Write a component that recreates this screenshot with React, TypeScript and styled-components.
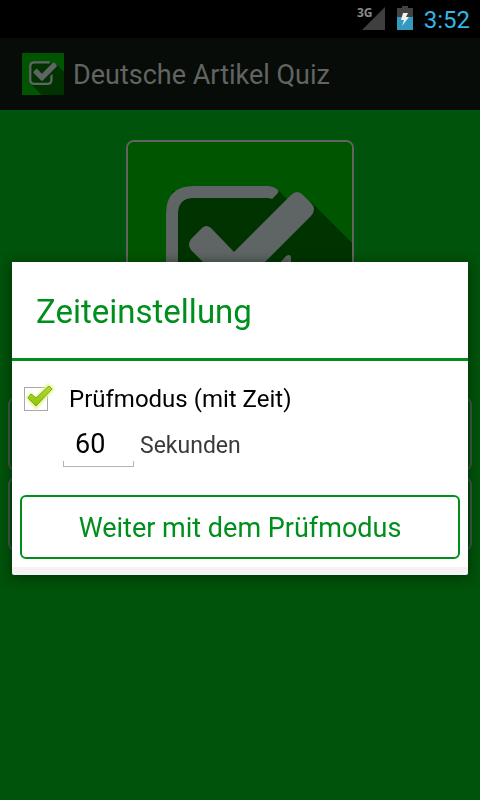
import React, { useState } from "react";
import styled, { createGlobalStyle } from "styled-components";

const GlobalStyle = createGlobalStyle`
  * { box-sizing: border-box; }
  body { margin: 0; background: #00530a; font-family: Roboto, "Liberation Sans", sans-serif; }
  button, input { font-family: inherit; }
`;

const Screen = styled.div`
  min-height: 100vh;
  display: flex;
  flex-direction: column;
  background: #00530a;
`;

const StatusBar = styled.header`
  height: 38px;
  flex: none;
  display: flex;
  align-items: center;
  justify-content: flex-end;
  gap: 11px;
  padding-right: 10px;
  background: #000;
`;

const Clock = styled.time`
  padding-top: 2px;
  font-size: 24px;
  line-height: 36px;
  color: #33b5e5;
`;

const ActionBar = styled.div`
  height: 72px;
  flex: none;
  display: flex;
  align-items: center;
  gap: 9px;
  padding: 0 22px;
  background: #070c08;
`;

const AppTitle = styled.h1`
  margin: 0;
  padding-top: 2px;
  font-size: 27px;
  line-height: 36px;
  font-weight: 400;
  color: #626462;
`;

const Home = styled.main`
  flex: 1;
  display: flex;
  flex-direction: column;
  align-items: center;
  gap: 8px;
  padding: 30px 8px;
`;

const LogoFrame = styled.div`
  width: 228px;
  margin-bottom: 22px;
  border: 2px solid #616461;
  border-radius: 8px;
  overflow: hidden;
  line-height: 0;
`;

const MenuButton = styled.button`
  width: 100%;
  height: 72px;
  border: 2px solid #4d574d;
  border-radius: 6px;
  background: transparent;
`;

const Overlay = styled.div`
  position: fixed;
  inset: 38px 0 0;
  display: flex;
  align-items: center;
  padding: 0 12px 1px;
`;

const Dialog = styled.form`
  flex: 1;
  background: #fff;
  border-bottom: 8px solid #f5f2f5;
  border-radius: 0 0 2px 2px;
  box-shadow: 0 2px 12px 1px rgba(0, 30, 0, 0.6);
`;

const DialogTitle = styled.h2`
  margin: 0;
  padding: 4px 24px 0;
  font-size: 33px;
  line-height: 92px;
  font-weight: 400;
  color: #008f1c;
  border-bottom: 3px solid #008f1c;
`;

const DialogBody = styled.div`
  padding: 16px 8px 8px;
`;

const CheckRow = styled.label`
  display: flex;
  align-items: center;
  gap: 15px;
  padding-left: 4px;
  font-size: 24px;
  line-height: 44px;
  color: #000;
`;

const CheckBoxWrap = styled.span`
  position: relative;
  width: 30px;
  height: 40px;
`;

const CheckBox = styled.input`
  appearance: none;
  position: absolute;
  top: 8px;
  left: 0;
  width: 24px;
  height: 24px;
  margin: 0;
  border: 1px solid #a9a6a9;
  background: #fff;
`;

const CheckMark = styled.svg`
  position: absolute;
  top: 0;
  left: 0;
  pointer-events: none;
`;

const TimeRow = styled.div`
  display: flex;
  align-items: center;
  gap: 6px;
  padding-left: 43px;
`;

const SecondsField = styled.div`
  display: flex;
  flex-direction: column;
  width: 71px;
`;

const SecondsInput = styled.input`
  width: 100%;
  height: 40px;
  padding: 6px 12px 0;
  border: 0;
  background: transparent;
  font-size: 27px;
  color: #000;
  outline: 0;
`;

const FieldLine = styled.span`
  height: 6px;
  border: 1px solid #b4b4b4;
  border-top: 0;
`;

const SecondsLabel = styled.label`
  padding-top: 4px;
  font-size: 23px;
  line-height: 42px;
  color: #3a3a3a;
`;

const SubmitButton = styled.button`
  display: block;
  width: 100%;
  height: 64px;
  margin-top: 28px;
  padding: 2px 0 0;
  border: 2px solid #008f1c;
  border-radius: 6px;
  background: #fff;
  font-size: 27px;
  line-height: 36px;
  color: #008f1c;
`;

function Logo({ size }: { size: number | string }) {
  return (
    <svg width={size} viewBox="0 0 224 224" aria-hidden="true">
      <rect width="224" height="224" fill="#005500" />
      <path d="M44 49H151L160 58L183 60L224 101V224H106L44 163Z" fill="#003300" />
      <path
        d="M141 44Q147 45 150 48Q151 50 149 52L144 57Q142 56 139 56H66Q50 56 50 72V142Q50 158 66 158H135Q151 158 151 142V122L158 114Q163 111 163 116V142Q163 170 135 170H66Q38 170 38 142V72Q38 44 66 44Z"
        fill="#5f6464"
      />
      <path
        d="M74 86Q78 82 83 86L106 110L163 53Q169 47 175 53L183 61Q189 67 183 74L112 145Q106 151 100 145L63 108Q59 103 63 97Z"
        fill="#5f6464"
      />
    </svg>
  );
}

function SignalIcon() {
  return (
    <svg width="30" height="38" viewBox="0 0 30 38" role="img" aria-label="3G">
      <path d="M29 7V30H6Z" fill="#3f3f3f" />
      <text x="1" y="17" fontFamily="Open Sans, sans-serif" fontWeight="700" fontSize="12" fill="#8a8a8a" stroke="#000" strokeWidth="2" paintOrder="stroke">
        3G
      </text>
    </svg>
  );
}

function BatteryIcon() {
  return (
    <svg width="16" height="26" viewBox="0 0 16 26" aria-hidden="true">
      <path d="M5 0H11V2H16V12H0V2H5Z" fill="#424242" />
      <path d="M0 11H16V24H0Z" fill="#3399bf" />
      <path d="M6 7H11L9 11H12L5 20L7 14H4Z" fill="#f2f2f2" />
    </svg>
  );
}

export default function App() {
  const [timed, setTimed] = useState(true);
  const [seconds, setSeconds] = useState("60");

  return (
    <Screen>
      <GlobalStyle />
      <StatusBar>
        <SignalIcon />
        <BatteryIcon />
        <Clock>3:52</Clock>
      </StatusBar>
      <ActionBar>
        <Logo size={42} />
        <AppTitle>Deutsche Artikel Quiz</AppTitle>
      </ActionBar>
      <Home>
        <LogoFrame>
          <Logo size="100%" />
        </LogoFrame>
        <MenuButton type="button" />
        <MenuButton type="button" />
      </Home>
      <Overlay>
        <Dialog role="dialog" aria-labelledby="dialog-title" onSubmit={(e) => e.preventDefault()}>
          <DialogTitle id="dialog-title">Zeiteinstellung</DialogTitle>
          <DialogBody>
            <CheckRow>
              <CheckBoxWrap>
                <CheckBox type="checkbox" checked={timed} onChange={(e) => setTimed(e.target.checked)} />
                {timed && (
                  <CheckMark width="34" height="34" viewBox="0 0 34 34" aria-hidden="true">
                    <defs>
                      <linearGradient id="tick" x1="0" y1="0" x2="0" y2="1">
                        <stop offset="0" stopColor="#b4dc2c" />
                        <stop offset="1" stopColor="#8cc60a" />
                      </linearGradient>
                      <filter id="glow" x="-30%" y="-30%" width="160%" height="160%">
                        <feGaussianBlur stdDeviation="1" />
                      </filter>
                    </defs>
                    <path d="M4 19L7 16L12 20L24 7L28 10L12 28Z" fill="#e4f49a" stroke="#e4f49a" strokeWidth="4" filter="url(#glow)" />
                    <path d="M4 19L7 15L12 19L25 7L28 10L12 27Z" fill="url(#tick)" stroke="#7da51c" strokeLinejoin="round" />
                  </CheckMark>
                )}
              </CheckBoxWrap>
              Prüfmodus (mit Zeit)
            </CheckRow>
            <TimeRow>
              <SecondsField>
                <SecondsInput id="seconds" inputMode="numeric" value={seconds} onChange={(e) => setSeconds(e.target.value)} />
                <FieldLine />
              </SecondsField>
              <SecondsLabel htmlFor="seconds">Sekunden</SecondsLabel>
            </TimeRow>
            <SubmitButton type="submit">Weiter mit dem Prüfmodus</SubmitButton>
          </DialogBody>
        </Dialog>
      </Overlay>
    </Screen>
  );
}
